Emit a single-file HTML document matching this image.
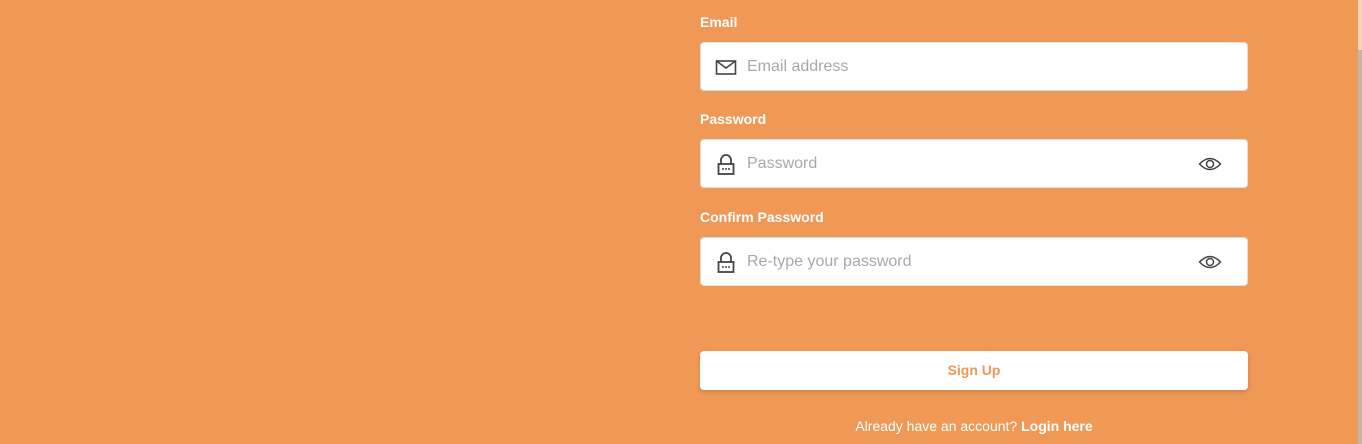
<!DOCTYPE html>
<html><head><style>
html,body{margin:0;padding:0;width:1362px;height:444px;overflow:hidden;background:#f09855;font-family:"Liberation Sans",sans-serif;position:relative}
.lbl{position:absolute;left:700px;color:#fff;font-weight:bold;font-size:14px}
.inp{position:absolute;left:700px;width:548px;height:49px;background:#fff;border:1px solid #ddd;border-radius:4px;box-sizing:border-box}
.ph{position:absolute;left:46px;top:15px;font-size:16px;color:#a8a8a8}
.ic{position:absolute;left:14px;top:13px}
.eye{position:absolute;left:497px;top:16px}
.btn{position:absolute;left:700px;top:351px;width:548px;height:39px;background:#fff;border-radius:4px;box-shadow:0 2px 4px rgba(0,0,0,.15);color:#f09855;font-weight:bold;font-size:14px;text-align:center;line-height:39px}
.foot{position:absolute;left:700px;width:548px;top:418px;text-align:center;color:#fff;font-size:14px}
.sb{position:absolute;left:1358px;top:50px;width:4px;height:394px;background:#c8b4a4}
.sbt{position:absolute;left:1358px;top:0;width:4px;height:50px;background:#f8d4b4}
</style></head><body>
<div class="lbl" style="top:14px">Email</div>
<div class="inp" style="top:42px">
<svg class="ic" width="22" height="22" viewBox="0 0 22 22"><rect x="1.5" y="5" width="19" height="13" fill="none" stroke="#444" stroke-width="1.6"/><path d="M1.5 5 L11 12 L20.5 5" fill="none" stroke="#444" stroke-width="1.6"/></svg>
<span class="ph">Email address</span></div>
<div class="lbl" style="top:111px">Password</div>
<div class="inp" style="top:139px">
<svg class="ic" width="22" height="24" viewBox="0 0 22 24"><path d="M6 11 V7 a5 5 0 0 1 10 0 V11" fill="none" stroke="#444" stroke-width="1.8"/><rect x="3.5" y="11" width="15" height="10" fill="none" stroke="#444" stroke-width="1.8"/><circle cx="8" cy="16" r="1" fill="#444"/><circle cx="11" cy="16" r="1" fill="#444"/><circle cx="14" cy="16" r="1" fill="#444"/></svg>
<span class="ph">Password</span>
<svg class="eye" width="24" height="16" viewBox="0 0 24 16"><path d="M1.5 8 Q12 -3 22.5 8 Q12 19 1.5 8Z" fill="none" stroke="#444" stroke-width="1.5"/><circle cx="12" cy="8" r="3.5" fill="none" stroke="#444" stroke-width="1.5"/></svg></div>
<div class="lbl" style="top:209px">Confirm Password</div>
<div class="inp" style="top:237px">
<svg class="ic" width="22" height="24" viewBox="0 0 22 24"><path d="M6 11 V7 a5 5 0 0 1 10 0 V11" fill="none" stroke="#444" stroke-width="1.8"/><rect x="3.5" y="11" width="15" height="10" fill="none" stroke="#444" stroke-width="1.8"/><circle cx="8" cy="16" r="1" fill="#444"/><circle cx="11" cy="16" r="1" fill="#444"/><circle cx="14" cy="16" r="1" fill="#444"/></svg>
<span class="ph">Re-type your password</span>
<svg class="eye" width="24" height="16" viewBox="0 0 24 16"><path d="M1.5 8 Q12 -3 22.5 8 Q12 19 1.5 8Z" fill="none" stroke="#444" stroke-width="1.5"/><circle cx="12" cy="8" r="3.5" fill="none" stroke="#444" stroke-width="1.5"/></svg></div>
<div class="btn">Sign Up</div>
<div class="foot">Already have an account? <b>Login here</b></div>
<div class="sbt"></div><div class="sb"></div>
</body></html>
